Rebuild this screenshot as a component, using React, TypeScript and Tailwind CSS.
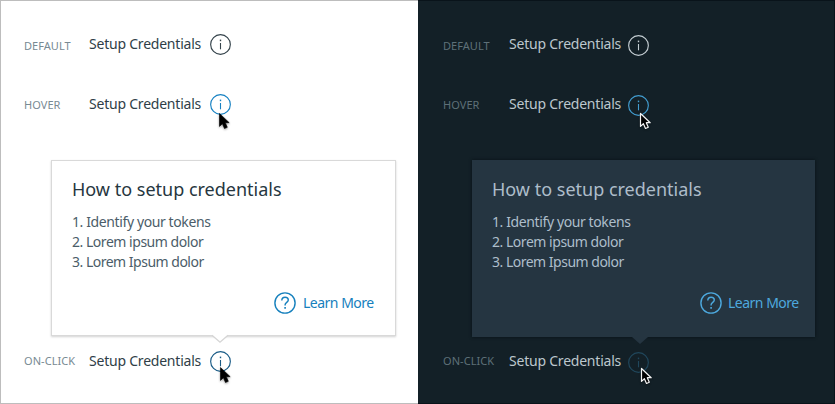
type Tone = 'light' | 'dark';

const label = "font-['Noto_Sans',sans-serif] text-[11px] leading-4 tracking-[0.05px]";

function InfoIcon() {
  return (
    <svg viewBox="0 0 21 21" className="block size-[21px]" fill="none" stroke="currentColor">
      <circle cx="10.5" cy="10.5" r="9.85" strokeWidth="1.15" />
      <path d="M10.5 9V15.3" strokeWidth="1.1" />
      <path d="M10.5 5.6V7.2" strokeWidth="1.4" />
    </svg>
  );
}

function HelpIcon() {
  return (
    <svg viewBox="0 0 22 22" className="block size-[22px]" fill="none" stroke="currentColor">
      <circle cx="11" cy="11" r="10.1" strokeWidth="1.4" />
      <path d="M7.8 8.4C7.8 6.5 9.2 5.2 11.1 5.2C13 5.2 14.3 6.4 14.3 8.1C14.3 10.3 11.1 10.5 11.1 12.8V13.5" strokeWidth="1.4" />
      <path d="M11.1 15V16.7" strokeWidth="1.6" />
    </svg>
  );
}

function Cursor({ tone, className }: { tone: Tone; className: string }) {
  return (
    <svg
      viewBox="0 0 14 20"
      className={`absolute h-5 w-[14px] overflow-visible drop-shadow-[0_1px_1px_rgba(0,0,0,0.4)] ${className}`}
    >
      <path
        d="M1.5 1.5V14.4L4.4 11.7L6.5 16.5L9.3 15.3L7.3 10.7H11.2Z"
        fill="#000"
        stroke={tone === 'light' ? '#000' : '#f3f3f3'}
        strokeWidth={tone === 'light' ? 0.6 : 1.2}
        strokeLinejoin="round"
      />
    </svg>
  );
}

function StateRow({ tone, name, iconClass, cursor, labelClass }: {
  tone: Tone; name: string; iconClass: string; cursor?: string; labelClass: string;
}) {
  const dark = tone === 'dark';
  return (
    <div className={`flex h-6 items-center ${dark ? 'pl-[25px]' : 'pl-[23px]'}`}>
      <span className={`${label} shrink-0 ${labelClass} ${dark ? 'w-[66px] text-[#5e7078]' : 'w-[65px] text-[#788a93]'}`}>{name}</span>
      <span className={`shrink-0 whitespace-nowrap text-[14px] leading-5 tracking-[-0.22px] ${dark ? 'w-[119px] text-[#bcc7cd]' : 'w-[121px] text-[#2f3e47]'}`}>
        Setup Credentials
      </span>
      <div className={`relative ${iconClass}`}>
        <InfoIcon />
        {cursor && <Cursor tone={tone} className={cursor} />}
      </div>
    </div>
  );
}

function Popover({ tone }: { tone: Tone }) {
  const dark = tone === 'dark';
  return (
    <div
      className={`relative flex flex-col ${dark
        ? 'ml-[54px] h-[177px] w-[343px] bg-[#253541] pt-[17px] pl-5 pr-4 shadow-[0_0_3px_#081116]'
        : 'ml-[50px] h-[176px] w-[345px] border border-[#d9d9d9] bg-white pt-4 pl-5 pr-[21px] shadow-[0_1px_2px_rgba(0,0,0,0.18)]'}`}
    >
      <h2 className={`text-[18px] leading-6 whitespace-nowrap ${dark ? 'text-[#aebdca]' : 'text-[#263640]'}`}>How to setup credentials</h2>
      <ol className={`mt-[11px] text-[14px] leading-5 tracking-[-0.39px] whitespace-nowrap ${dark ? 'text-[#adbecb]' : 'text-[#4b5d69]'}`}>
        <li>1. Identify your tokens</li>
        <li className="tracking-[-0.47px]">2. Lorem ipsum dolor</li>
        <li className="tracking-[-0.5px]">3. Lorem Ipsum dolor</li>
      </ol>
      <div className={`mt-5 flex items-center justify-end ${dark ? 'gap-1.5 text-[#4da9de]' : 'gap-[7px] text-[#1680bd]'}`}>
        <HelpIcon />
        <span className="w-[71px] text-[14px] leading-5 tracking-[-0.5px] whitespace-nowrap">Learn More</span>
      </div>
      <svg
        viewBox="0 0 18 10"
        className={`absolute h-[10px] w-[18px] ${dark ? 'left-[159px] top-[176px]' : 'left-[159px] top-[173px]'}`}
      >
        <path
          d="M1 0V1L9 8L17 1V0Z"
          fill={dark ? '#253541' : '#fff'}
        />
        {!dark && <path d="M1 1.2L9 8.2L17 1.2" fill="none" stroke="#d5d5d5" strokeWidth="1.3" />}
      </svg>
    </div>
  );
}

function Panel({ tone }: { tone: Tone }) {
  const dark = tone === 'dark';
  return (
    <section
      className={`flex h-full flex-col pt-[31px] ${dark
        ? 'w-[417px] border-y border-r border-[#09131a] bg-[#132027]'
        : 'w-[418px] border-y border-l border-[#bdbdbd] bg-white'}`}
    >
      <StateRow tone={tone} name="DEFAULT" labelClass="mt-[3px]" iconClass={dark ? 'mt-[3px] text-[#c4cdd2]' : 'mt-px text-[#35434b]'} />
      <div className="mt-9">
        <StateRow
          tone={tone} name="HOVER" labelClass="mt-px"
          iconClass={dark ? 'mt-[3px] text-[#429dd0]' : 'mt-px text-[#1681c2]'}
          cursor={dark ? 'left-[11px] top-[17px]' : 'left-[8px] top-[18px]'}
        />
      </div>
      <div className="mt-11">
        <Popover tone={tone} />
      </div>
      <div className={dark ? 'mt-3' : 'mt-[13px]'}>
        <StateRow
          tone={tone} name="ON-CLICK" labelClass="tracking-[-0.1px]"
          iconClass={dark ? 'mt-[2px] text-[#20475c]' : '-ml-[0.5px] text-[#195b86]'}
          cursor={dark ? 'left-[12px] top-[15px]' : 'left-[9px] top-[15px]'}
        />
      </div>
    </section>
  );
}

export default function App() {
  return (
    <main className="flex h-[404px] w-[835px] overflow-hidden bg-white font-['Noto_Sans',sans-serif]">
      <Panel tone="light" />
      <Panel tone="dark" />
    </main>
  );
}
